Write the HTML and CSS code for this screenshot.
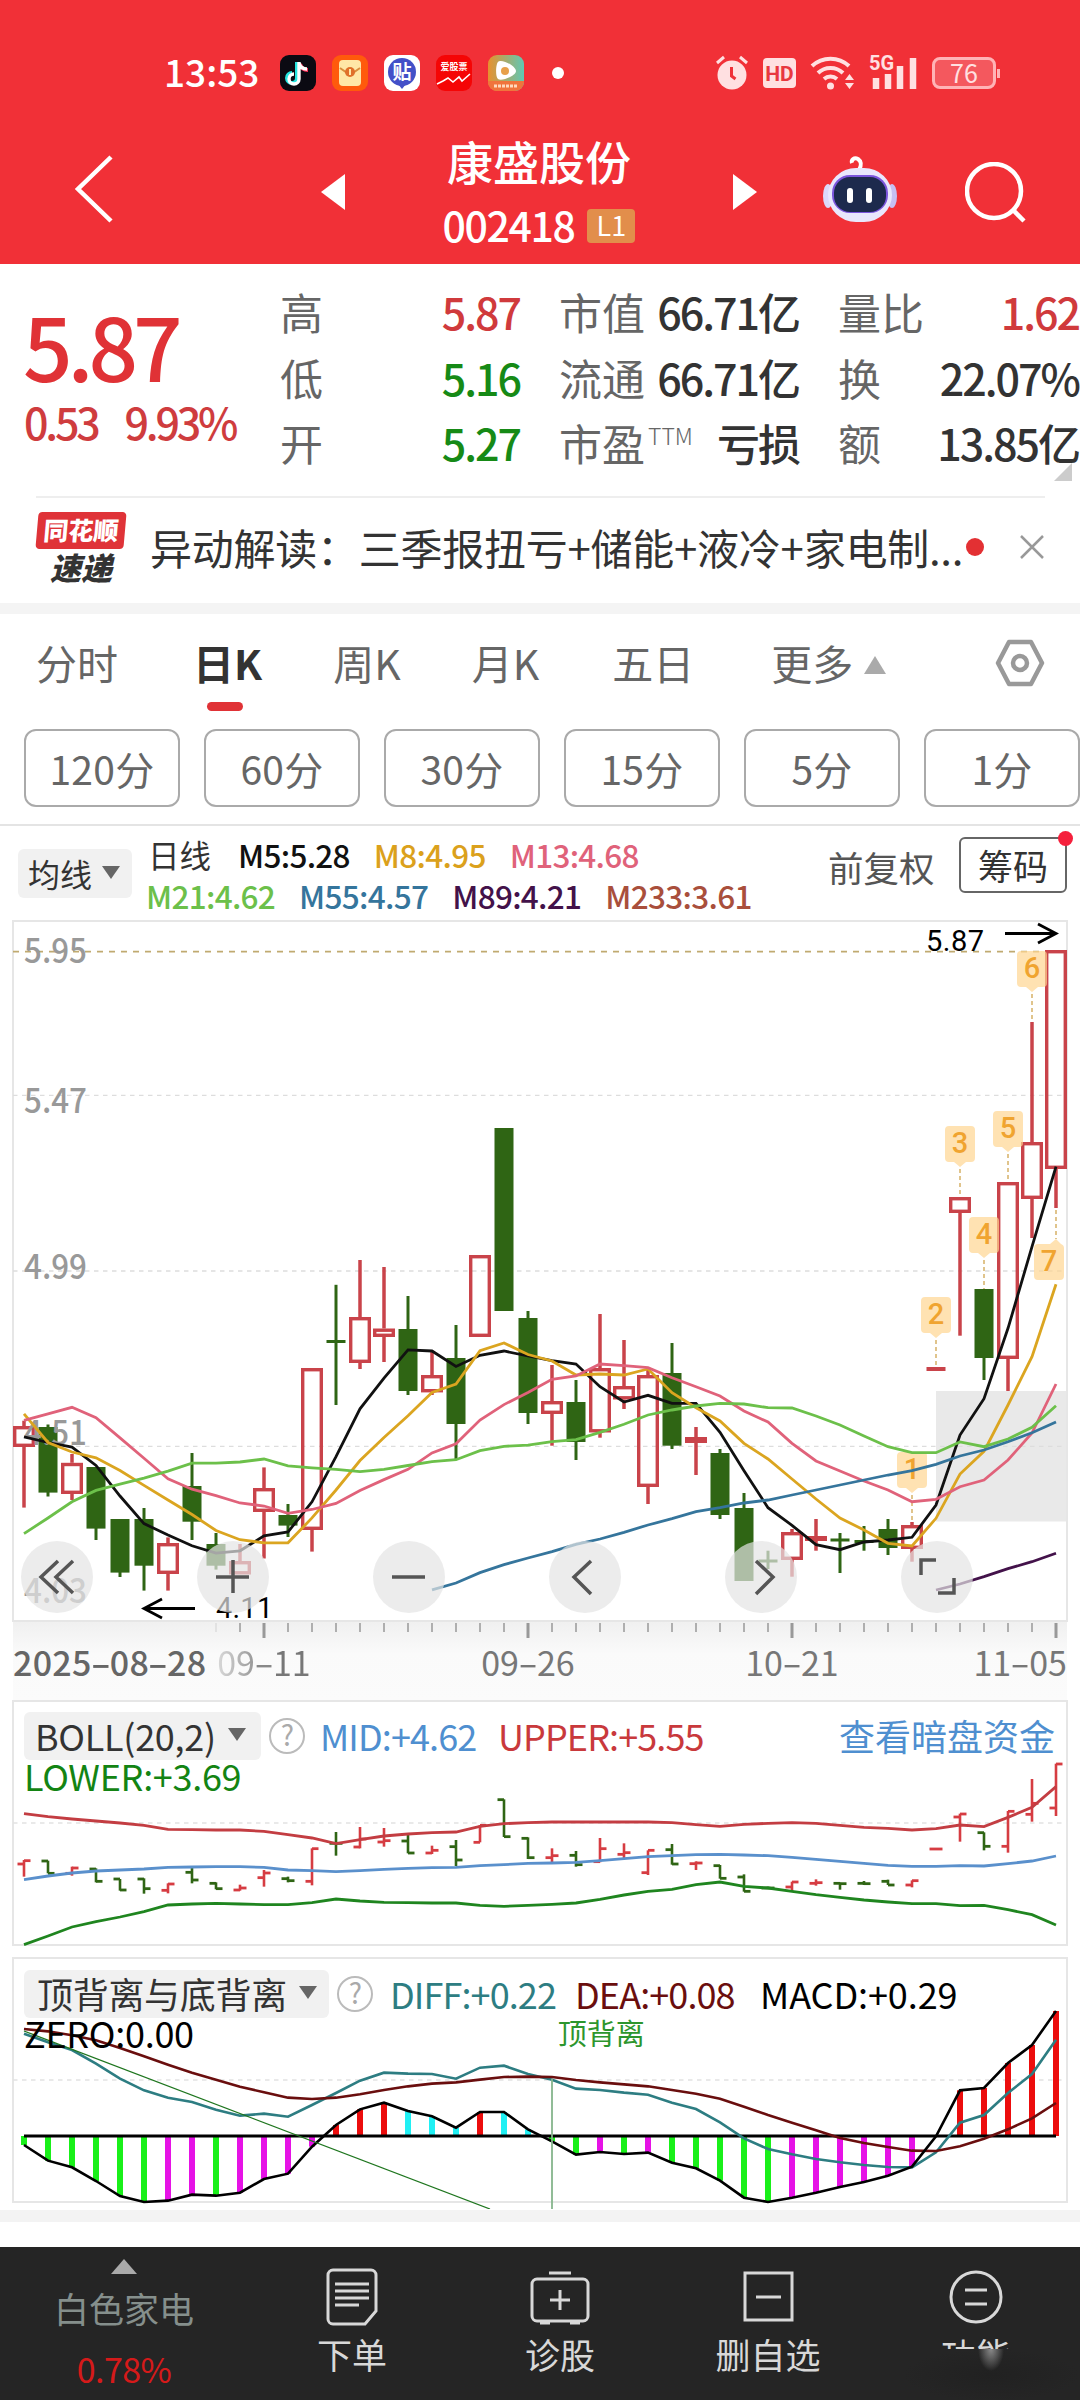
FILE: index.html
```html
<!DOCTYPE html>
<html lang="zh-CN">
<head>
  <meta charset="UTF-8" />
  <meta name="viewport" content="width=device-width, initial-scale=1.0"/>
  <title>康盛股份 002418</title>
  <link rel="stylesheet" href="styles.css">
</head>
<body>

  <header class="header">
    <div class="status-bar">
      <span class="time">13:53</span>
      <div class="apps">
        <svg class="app" viewBox="0 0 36 36"><rect width="36" height="36" rx="9" fill="#0b0a12"/><path d="M17 7v16a5 5 0 1 1-5-5" fill="none" stroke="#25e5e0" stroke-width="4"/><path d="M20 9c1 4 4 6 8 6" fill="none" stroke="#fe2c55" stroke-width="4"/><path d="M19 7v17a5 5 0 1 1-5-5M19 8c1 4 4 6 8 6" fill="none" stroke="#fff" stroke-width="3.4"/></svg>
        <svg class="app" viewBox="0 0 36 36"><rect width="36" height="36" rx="9" fill="#ff5a0c"/><rect x="7" y="5" width="22" height="26" rx="4" fill="#ffe7a6"/><path d="M8 13l10 7 10-7" fill="none" stroke="#d98d3c" stroke-width="2"/><circle cx="18" cy="17" r="5" fill="#e0702a"/><path d="M18 14v6" stroke="#ffe7a6" stroke-width="2"/></svg>
        <svg class="app" viewBox="0 0 36 36"><rect width="36" height="36" rx="9" fill="#fff"/><circle cx="18" cy="17" r="14" fill="#4350c8"/><path d="M14 29h8l-4 5z" fill="#4350c8"/><text x="18" y="24" class="app-text" font-size="19">贴</text></svg>
        <svg class="app" viewBox="0 0 36 36"><rect width="36" height="36" rx="9" fill="#f50505"/><text x="18" y="15" class="app-text" font-size="9">爱股票</text><path d="M1 29l6-3 5-3 5 4 6-5 3 4 8-7" fill="none" stroke="#fff" stroke-width="1.6"/></svg>
        <svg class="app" viewBox="0 0 36 36"><defs><linearGradient id="play" x1="0" x2="1"><stop offset="0" stop-color="#e8912d"/><stop offset="1" stop-color="#5fc8b4"/></linearGradient></defs><rect width="36" height="36" rx="9" fill="url(#play)"/><path d="M0 26h36v1a9 9 0 0 1-9 9H9a9 9 0 0 1-9-9z" fill="#f0743c"/><path d="M10 7c3-4 18 4 18 9S13 27 10 24s-2-15 0-17z" fill="#fff"/><circle cx="17" cy="16" r="4" fill="#e8a04a"/><path d="M6 31h24" stroke="#ffd9bd" stroke-width="3" stroke-dasharray="3 1"/></svg>
        <i class="more-dot"></i>
      </div>
      <div class="signals">
        <svg width="34" height="36" viewBox="0 0 34 36"><circle cx="17" cy="20" r="14.5" fill="#ffe0e1"/><path d="M2 8l7-6M32 8l-7-6" stroke="#ffe0e1" stroke-width="3"/><path d="M16.500 12v9l4 3" fill="none" stroke="#ef3038" stroke-width="3"/></svg>
        <svg width="33" height="30" viewBox="0 0 33 30"><rect width="33" height="30" rx="4" fill="#ffe0e1"/><text x="16.500" y="23" class="hd">HD</text></svg>
        <svg width="46" height="36" viewBox="0 0 46 36"><g fill="none" stroke="#ffe0e1" stroke-width="4"><path d="M2 11a27 27 0 0 1 37 0M8 18a18 18 0 0 1 25 0M14 24a10 10 0 0 1 13 0"/></g><circle cx="20.500" cy="31" r="3.500" fill="#ffe0e1"/><path d="M35 25l4.500-6 4.500 6zM35 28l4.500 6 4.500-6z" fill="#ffe0e1"/></svg>
        <svg width="48" height="36" viewBox="0 0 48 36" overflow="visible"><text x="-1" y="15" class="net">5G</text><path d="M6 23v11M18 19v15M30 11v23M43 3v31" stroke="#ffe0e1" stroke-width="6.500"/></svg>
        <div class="battery">76</div>
      </div>
    </div>

    <div class="title-bar">
      <svg class="back" viewBox="0 0 40 68"><path d="M37 2L4 34l33 32" fill="none" stroke="#fff" stroke-width="4.500"/></svg>
      <svg class="prev" viewBox="0 0 24 36"><path d="M24 0v36L0 18z" fill="#fff"/></svg>
      <div class="stock">
        <h1>康盛股份</h1>
        <div class="code">002418 <span class="level">L1</span></div>
      </div>
      <svg class="next" viewBox="0 0 24 36"><path d="M0 0v36l24-18z" fill="#fff"/></svg>
      <svg class="robot" viewBox="0 0 74 68">
        <path d="M36 15c3-5 2-9-1-11-4-2-7 1-6 4" fill="none" stroke="#fff" stroke-width="4"/>
        <ellipse cx="5" cy="41" rx="5" ry="12" fill="#dcd8fa"/><ellipse cx="69" cy="41" rx="5" ry="12" fill="#c6bff3"/>
        <rect x="5" y="13" width="64" height="54" rx="28" fill="#e9e7fc"/>
        <rect x="9" y="20" width="56" height="38" rx="18" fill="#7b55dc"/>
        <rect x="11" y="22" width="52" height="35" rx="16" fill="#1d2a4d"/>
        <rect x="24" y="33" width="6" height="15" rx="3" fill="#fff"/><rect x="43" y="33" width="6" height="15" rx="3" fill="#fff"/>
      </svg>
      <svg class="search" viewBox="0 0 62 62"><circle cx="29" cy="29" r="27" fill="none" stroke="#fff" stroke-width="4.500"/><path d="M48 48l11 11" stroke="#fff" stroke-width="4.500"/></svg>
    </div>
  </header>

  <section class="quote">
    <div class="price-box">
      <div class="price">5.87</div>
      <div class="change"><span>0.53</span><span>9.93%</span></div>
    </div>
    <dl class="stats">
      <div><dt>高</dt><dd class="up">5.87</dd></div>
      <div><dt>低</dt><dd class="down">5.16</dd></div>
      <div><dt>开</dt><dd class="down">5.27</dd></div>
    </dl>
    <dl class="stats">
      <div><dt>市值</dt><dd>66.71亿</dd></div>
      <div><dt>流通</dt><dd>66.71亿</dd></div>
      <div><dt>市盈<sup>TTM</sup></dt><dd>亏损</dd></div>
    </dl>
    <dl class="stats">
      <div><dt>量比</dt><dd class="up">1.62</dd></div>
      <div><dt>换</dt><dd>22.07%</dd></div>
      <div><dt>额</dt><dd>13.85亿</dd></div>
    </dl>
    <i class="corner"></i>
  </section>

  <section class="news">
    <div class="news-logo">
      <span class="logo-top">同花顺</span>
      <span class="logo-bottom">速递</span>
    </div>
    <p>异动解读：三季报扭亏+储能+液冷+家电制...</p>
    <i class="news-dot"></i>
    <svg class="close" viewBox="0 0 24 24"><path d="M1 1l22 22M23 1L1 23" stroke="#999" stroke-width="2.500"/></svg>
  </section>

  <nav class="tabs">
    <a>分时</a>
    <a class="active">日K</a>
    <a>周K</a>
    <a>月K</a>
    <a>五日</a>
    <a>更多<i class="tri-up"></i></a>
    <svg class="setting" viewBox="0 0 50 48"><path d="M14 3h22l11 21-11 21H14L3 24z" fill="none" stroke="#999" stroke-width="4.500" stroke-linejoin="round"/><circle cx="25" cy="24" r="7" fill="none" stroke="#999" stroke-width="4.500"/></svg>
  </nav>

  <div class="periods">
    <button>120分</button>
    <button>60分</button>
    <button>30分</button>
    <button>15分</button>
    <button>5分</button>
    <button>1分</button>
  </div>

  <section class="ma-bar">
    <span class="select ma-select">均线<i class="tri-down"></i></span>
    <div class="ma-values">
      <div class="ma-row">
        <span class="c-dark">日线</span>
        <span class="c-m5">M5:5.28</span>
        <span class="c-m8">M8:4.95</span>
        <span class="c-m13">M13:4.68</span>
      </div>
      <div class="ma-row">
        <span class="c-m21">M21:4.62</span>
        <span class="c-m55">M55:4.57</span>
        <span class="c-m89">M89:4.21</span>
        <span class="c-m233">M233:3.61</span>
      </div>
    </div>
    <span class="adjust">前复权</span>
    <span class="chips">筹码</span>
  </section>

  <section class="kline">
    <svg id="kline" width="1080" height="702" viewBox="0 920 1080 702"></svg>
    <div class="controls">
      <button><svg viewBox="0 0 72 72"><path d="M37 20L20 36l17 16M52 20L35 36l17 16"/></svg></button>
      <button><svg viewBox="0 0 72 72"><path d="M19 36h33M36 19v33"/></svg></button>
      <button><svg viewBox="0 0 72 72"><path d="M19 36h33"/></svg></button>
      <button><svg viewBox="0 0 72 72"><path d="M42 20L25 36l17 17"/></svg></button>
      <button><svg viewBox="0 0 72 72"><path d="M31 20l17 16-17 17"/></svg></button>
      <button><svg viewBox="0 0 72 72"><path d="M20 34V19h15M37 52h16V37"/></svg></button>
    </div>
  </section>

  <div class="axis">
    <svg id="ticks" width="1080" height="18" viewBox="0 1621 1080 18"></svg>
    <div class="dates">
      <span class="first">2025<i>-</i>08<i>-</i>28</span>
      <span>09<i>-</i>11</span>
      <span>09<i>-</i>26</span>
      <span>10<i>-</i>21</span>
      <span>11<i>-</i>05</span>
    </div>
  </div>

  <section class="panel boll">
    <svg class="plot" id="boll" width="1080" height="248" viewBox="0 1700 1080 248"></svg>
    <div class="legend">
      <span class="select">BOLL(20,2)<i class="tri-down"></i></span>
      <span class="help">?</span>
      <span class="c-mid">MID:+4.62</span>
      <span class="c-upper">UPPER:+5.55</span>
      <a>查看暗盘资金</a>
    </div>
    <div class="legend second c-lower">LOWER:+3.69</div>
  </section>

  <section class="panel macd">
    <svg class="plot" id="macd" width="1080" height="252" viewBox="0 1958 1080 252"></svg>
    <div class="legend">
      <span class="select">顶背离与底背离<i class="tri-down"></i></span>
      <span class="help">?</span>
      <span class="c-diff">DIFF:+0.22</span>
      <span class="c-dea">DEA:+0.08</span>
      <span class="c-macd">MACD:+0.29</span>
    </div>
    <div class="legend second c-macd"><span>ZERO:0.00</span><span class="diverge">顶背离</span></div>
  </section>

  <footer class="bottom-bar">
    <a class="sector">
      <i class="tri-up"></i>
      <span>白色家电</span>
      <b>0.78%</b>
    </a>
    <a>
      <svg viewBox="0 0 60 60"><path d="M11 3h38a5 5 0 0 1 5 5v36L43 57H11a5 5 0 0 1-5-5V8a5 5 0 0 1 5-5zM13 17h34M13 24h34M13 31h34M13 38h24"/></svg>
      <span>下单</span>
    </a>
    <a>
      <svg viewBox="0 0 60 60"><path d="M7 12h46a5 5 0 0 1 5 5v32a5 5 0 0 1-5 5H7a5 5 0 0 1-5-5V17a5 5 0 0 1 5-5zM19 6h22M30 23v20M20 33h20M10 56h10M40 56h10"/></svg>
      <span>诊股</span>
    </a>
    <a>
      <svg viewBox="0 0 60 60"><path d="M7 6h47v47H7zM18 30h25"/></svg>
      <span>删自选</span>
    </a>
    <a class="func">
      <svg viewBox="0 0 60 60"><circle cx="30" cy="30" r="25"/><path d="M19 23h22M19 37h22"/></svg>
      <span>功能</span>
    </a>
  </footer>

  <script src="chart.js"></script>
</body>
</html>
```
FILE: styles.css
```css
* {
  box-sizing: border-box;
}

body {
  margin: 0;
  width: 1080px;
  height: 2400px;
  overflow: hidden;
  background: #fff;
  color: #333;
  font-family: 'Noto Sans CJK SC', 'Roboto', sans-serif;
}

h1, p, dl, dt, dd {
  margin: 0;
}

i {
  font-style: normal;
}

svg {
  display: block;
  flex: none;
}

button {
  font-family: inherit;
  padding: 0;
  background: none;
}

/* header */
.header {
  height: 264px;
  background: #f13037;
  color: #fff;
}

.status-bar {
  height: 122px;
  padding: 50px 84px 0 164px;
  display: flex;
}

.status-bar > * {
  height: 46px;
  display: flex;
  align-items: center;
}

.time {
  width: 116px;
  font-size: 37px;
  font-weight: 500;
  line-height: 46px;
  margin-top: -2px;
}

.apps {
  gap: 16px;
}

.app {
  width: 36px;
  height: 36px;
}

.app-text {
  fill: #fff;
  text-anchor: middle;
  font-weight: 700;
}

.more-dot {
  width: 12px;
  height: 12px;
  margin-left: 12px;
  border-radius: 50%;
  background: #fff;
}

.signals {
  margin-left: auto;
  gap: 14px;
}

.hd {
  fill: #e8383f;
  font: 700 21px 'Roboto', sans-serif;
  text-anchor: middle;
}

.net {
  fill: #ffe0e1;
  font: 700 20px 'Roboto', sans-serif;
}

.battery {
  position: relative;
  width: 64px;
  height: 32px;
  border: 3px solid #ffb3b6;
  border-radius: 8px;
  background: #f4585e;
  color: #ffe0e1;
  font-size: 25px;
  line-height: 24px;
  text-align: center;
}

.battery::after {
  content: "";
  position: absolute;
  right: -7px;
  top: 9px;
  width: 3px;
  height: 9px;
  background: #ffb3b6;
}

.title-bar {
  display: flex;
  align-items: center;
  height: 142px;
  padding: 0 54px 6px 74px;
}

.back {
  width: 40px;
  height: 68px;
  margin-top: -2px;
}

.prev, .next {
  width: 24px;
  height: 36px;
  margin-top: 4px;
}

.prev {
  margin-left: 207px;
}

.stock {
  width: 388px;
  text-align: center;
}

.stock h1 {
  font-size: 46px;
  font-weight: 500;
  line-height: 64px;
  margin-top: 4px;
}

.code {
  display: flex;
  justify-content: center;
  align-items: center;
  gap: 13px;
  height: 64px;
  font-size: 41px;
  font-weight: 500;
  letter-spacing: -1.400px;
}

.level {
  width: 48px;
  height: 34px;
  margin-top: 3px;
  border-radius: 4px;
  background: #e28e4b;
  font-size: 27px;
  font-weight: 400;
  line-height: 32px;
  letter-spacing: 0;
}

.robot {
  width: 74px;
  height: 68px;
  margin: -2px 0 0 66px;
}

.search {
  width: 62px;
  height: 62px;
  margin: 5px -1px 0 auto;
}

/* quote */
.quote {
  position: relative;
  display: flex;
  height: 232px;
  margin: 0 1px 0 24px;
  padding-top: 14px;
}

.price-box {
  width: 256px;
  color: #e03236;
}

.price {
  height: 112px;
  margin-left: -1px;
  font-size: 87px;
  font-weight: 500;
  line-height: 132px;
  letter-spacing: -5px;
}

.change {
  display: flex;
  gap: 27px;
  font-size: 43px;
  font-weight: 500;
  line-height: 62px;
  letter-spacing: -3.200px;
  color: #cf3c3e;
}

.stats {
  width: 240px;
  margin-right: 39px;
}

.stats:last-of-type {
  width: 241px;
  margin-right: 0;
}

.stats div {
  display: flex;
  justify-content: space-between;
  height: 65.500px;
  font-size: 43px;
  line-height: 66px;
  white-space: nowrap;
}

.stats dt {
  color: #666;
}

.stats dd {
  font-weight: 500;
  letter-spacing: -2px;
}

.stats sup {
  margin-left: 3px;
  font-size: 23px;
  line-height: 1;
  vertical-align: 16px;
  letter-spacing: 0;
  font-weight: 300;
}

.up {
  color: #d03a3c;
}

.down {
  color: #168a16;
}

.corner {
  position: absolute;
  right: 7px;
  bottom: 15px;
  border-left: 18px solid transparent;
  border-bottom: 18px solid #ccc;
}

/* news */
.news {
  display: flex;
  align-items: center;
  height: 118px;
  padding: 0 36px 6px 37px;
  border-bottom: 11px solid #f4f4f4;
  background: linear-gradient(#eee, #eee) 36px 0 / 1009px 2px no-repeat;
}

.news-logo {
  width: 88px;
  margin-right: 25px;
  padding-top: 4px;
  text-align: center;
  white-space: nowrap;
}

.logo-top {
  display: block;
  height: 37px;
  border-radius: 4px;
  background: #df3338;
  color: #fff;
  font-size: 25px;
  font-weight: 900;
  line-height: 34px;
  transform: skewX(-5deg);
}

.logo-bottom {
  display: block;
  font-size: 31px;
  font-weight: 900;
  font-style: italic;
  line-height: 36px;
}

.news p {
  width: 814px;
  font-size: 42px;
  line-height: 60px;
  letter-spacing: -0.250px;
  white-space: nowrap;
  color: #333;
}

.news-dot {
  width: 18px;
  height: 18px;
  margin-left: 2px;
  border-radius: 50%;
  background: #e33033;
}

.close {
  width: 24px;
  height: 24px;
  margin-left: auto;
}

/* tabs */
.tabs {
  display: flex;
  align-items: center;
  height: 101px;
  padding: 0 35px 5px 36px;
  font-size: 41px;
  color: #666;
}

.tabs a {
  position: relative;
  margin-right: 71px;
  white-space: nowrap;
}

.tabs a:nth-child(1) {
  margin-right: 75px;
}

.tabs a:nth-child(4) {
  margin-right: 73px;
}

.tabs a:nth-child(5) {
  margin-right: 77px;
}

.tabs .active {
  color: #333;
  font-weight: 700;
}

.active::after {
  content: "";
  position: absolute;
  left: 14px;
  bottom: -19px;
  width: 36px;
  height: 9px;
  border-radius: 5px;
  background: #e03236;
}

.tri-up, .tri-down {
  display: inline-block;
  border: 10px solid transparent;
}

.tri-up {
  border-width: 0 11px 18px;
  border-bottom-color: #aaa;
  margin: 0 0 6px 11px;
}

.tri-down {
  border-width: 13px 9px 0;
  border-top-color: #666;
  margin-left: 12px;
}

.tabs .setting {
  width: 50px;
  height: 48px;
  margin: 1px 0 0 auto;
}

.tabs a:nth-child(6) {
  margin-right: 0;
}

.periods {
  display: flex;
  gap: 24px;
  height: 111px;
  padding: 14px 0 0 24px;
  border-bottom: 2px solid #e4e4e4;
}

.periods button {
  width: 156px;
  height: 78px;
  border: 2px solid #aaa;
  border-radius: 12px;
  color: #666;
  font-size: 39px;
  line-height: 70px;
  letter-spacing: 0.300px;
}

/* moving averages */
.ma-bar {
  display: flex;
  height: 94px;
  padding: 8px 13px 0 18px;
}

.select {
  display: flex;
  align-items: center;
  height: 48px;
  padding: 0 13px 3px;
  border-radius: 6px;
  background: #f1f1f1;
  color: #333;
}

.ma-select {
  width: 114px;
  height: 49px;
  margin-top: 15px;
  padding: 0 10px 2px;
  font-size: 32px;
}

.ma-select .tri-down {
  margin-left: 10px;
}

.ma-values {
  width: 681px;
  padding-left: 14px;
  font-size: 31.500px;
  font-weight: 500;
  letter-spacing: -0.700px;
}

.ma-row {
  display: flex;
  gap: 24px;
  height: 41px;
  line-height: 41px;
  white-space: nowrap;
}

.ma-row .c-dark {
  margin: 0 3px 0 2px;
  font-weight: 400;
  letter-spacing: 0;
}

.adjust {
  width: 133px;
  padding-left: 15px;
  font-size: 35.500px;
  line-height: 65px;
  color: #555;
}

.chips {
  position: relative;
  width: 108px;
  height: 56px;
  margin: 3px 0 0 auto;
  border: 2px solid #666;
  border-radius: 6px;
  font-size: 35px;
  line-height: 51px;
  text-align: center;
}

.chips::after {
  content: "";
  position: absolute;
  right: -8px;
  top: -8px;
  width: 15px;
  height: 15px;
  border-radius: 50%;
  background: #f5203c;
}

.c-m5 { color: #111; }
.c-m8 { color: #dba11c; }
.c-m13 { color: #e0627a; }
.c-m21 { color: #6cc04a; }
.c-m55 { color: #35759c; }
.c-m89 { color: #43124a; }
.c-m233 { color: #a94f3c; }
.c-mid { color: #4f8fd0; }
.c-upper { color: #c9393c; }
.c-lower { color: #138413; }
.c-diff { color: #2d7d82; }
.c-dea { color: #6a0e0e; }
.c-macd { color: #000; }

/* k line chart */
.kline {
  position: relative;
  height: 702px;
}

.controls {
  position: absolute;
  left: 21px;
  right: 107px;
  bottom: 9px;
  display: flex;
  justify-content: space-between;
}

.controls button {
  width: 72px;
  height: 72px;
  border: 0;
  border-radius: 50%;
  background: rgba(228, 228, 228, 0.7);
}

.controls path {
  fill: none;
  stroke: #555;
  stroke-width: 3.500;
}

.axis-label {
  fill: #999;
  font-size: 34px;
  font-weight: 500;
}

.extreme {
  fill: #000;
  font: 29px 'Roboto', sans-serif;
}

.tag-text {
  fill: #f0a430;
  font: 500 29px 'Roboto', sans-serif;
  text-anchor: middle;
}

.axis {
  height: 79px;
  margin: 0 13px;
  background: linear-gradient(#f0f0f0, #fafafa 40%, #fbfbfb);
}

.axis svg {
  margin-left: -13px;
}

.dates {
  display: flex;
  height: 44px;
  font-size: 34px;
  line-height: 44px;
  white-space: nowrap;
  color: #777;
}

.dates i {
  display: inline-block;
  width: 18px;
  text-align: center;
  transform: scaleX(1.700);
}

.dates span {
  width: 98px;
  margin-left: 166px;
  text-align: center;
}

.dates .first {
  width: 202px;
  margin-left: 0;
  text-align: left;
  font-weight: 500;
  color: #666;
  letter-spacing: 0.300px;
}

.dates span:nth-child(2) {
  margin-left: 0;
  background: linear-gradient(90deg, #ddd, #777 60%);
  background-clip: text;
  color: transparent;
}

.dates span:nth-child(2) i {
  color: #888;
}

.dates span:last-child {
  margin-left: auto;
  text-align: right;
}

/* indicator panels */
.panel {
  position: relative;
}

.plot {
  position: absolute;
  left: 0;
  top: 0;
}

.legend {
  position: relative;
  display: flex;
  align-items: center;
  height: 48px;
  font-size: 36px;
  line-height: 40px;
  letter-spacing: -0.900px;
  white-space: nowrap;
}

.legend > span:not(.select):not(.help), .legend a {
  margin-top: -3px;
}

.legend .select {
  letter-spacing: -0.300px;
}

.legend.second {
  height: 30px;
  line-height: 30px;
  letter-spacing: -0.300px;
}

.boll {
  height: 257px;
  margin-top: -1px;
  padding: 12px 25px 0 24px;
}

.boll .select {
  width: 237px;
  padding-left: 11px;
}

.boll .help + span {
  width: 178px;
}

.legend a {
  margin-left: auto;
  color: #4f8fd0;
  letter-spacing: 0;
}

.help {
  width: 36px;
  height: 36px;
  margin: 0 15px 0 8px;
  border: 2.500px solid #bbb;
  border-radius: 50%;
  color: #aaa;
  font-size: 28px;
  line-height: 29px;
  text-align: center;
}

.macd {
  height: 265px;
  padding: 13px 24px 0;
  border-bottom: 12px solid #f3f3f3;
}

.macd .select {
  width: 305px;
}

.macd .help ~ span {
  width: 185px;
}

.macd .help ~ .c-macd {
  letter-spacing: -0.100px;
}

.macd .help {
  margin-right: 17px;
}

.legend .diverge {
  margin-left: 364px;
  font-size: 29px;
  letter-spacing: 0;
  color: #2d962d;
}

/* bottom bar */
.bottom-bar {
  display: flex;
  height: 154px;
  margin-top: 25px;
  background: #252525;
  color: #d8d8d8;
  font-size: 35px;
}

.bottom-bar a {
  flex: 1;
  display: flex;
  flex-direction: column;
  align-items: center;
  padding-top: 20px;
}

.bottom-bar svg {
  width: 60px;
  height: 60px;
  fill: none;
  stroke: #d8d8d8;
  stroke-width: 3;
}

.bottom-bar span {
  margin-top: 2px;
  line-height: 50px;
}

.bottom-bar .sector {
  flex: 0 0 248px;
  padding-top: 12px;
}

.sector .tri-up {
  border-width: 0 13px 15px;
  margin: 0;
}

.bottom-bar .sector span {
  margin-top: 9px;
  color: #858f8c;
}

.sector b {
  margin-top: 11px;
  font-size: 34px;
  font-weight: 400;
  line-height: 50px;
  letter-spacing: -0.600px;
  color: #d51a1a;
}

.func {
  position: relative;
}

/* fade over the lower part of the last label */
.func::after {
  content: "";
  position: absolute;
  left: 30px;
  right: 0;
  top: 102px;
  bottom: 0;
  background: radial-gradient(ellipse 13px 22px at 89px 0, #8a8a8a, transparent), radial-gradient(ellipse at center, #212121, #252525 70%);
}
```
FILE: chart.js
```js
const RED = "#c9434a";
const GREEN = "#2f6514";
const STEP = 24;
const x = i => 24 + i * STEP;

// [direction, high, top, bottom, low]
const candles = [
  ["r",1420.7,1426,1447,1507.6],["g",1424.5,1427,1492.6,1496.5],["r",1454,1462.8,1494,1500],["g",1467,1467,1528.6,1540],
  ["g",1519,1519,1572.6,1577],["g",1508,1519,1565.7,1590.6],["r",1537.4,1543,1574,1590.6],["g",1453,1486,1521.7,1540],
  ["g",1533,1544,1565.7,1569.6],["r",1544,1561,1574.5,1574.5],["r",1467.4,1488,1512,1558.5],["g",1504,1515,1525.6,1537],
  ["r",1368,1368,1530,1551.6],["g",1284.8,1340,1343,1405],["r",1260,1317,1363,1369],["r",1267,1328.5,1337,1362],
  ["g",1296,1329,1391,1395],["r",1350.7,1375,1392.4,1395],["g",1325,1358,1424,1459.7],["r",1255,1255,1337,1337],
  ["g",1128,1128,1311,1311],["g",1311,1318,1413,1424],["r",1365,1401,1414,1445.7],["g",1380,1402,1442,1460],
  ["r",1314,1368,1432.5,1437.7],["r",1340,1386,1399.5,1409],["r",1370,1375,1487,1504],["g",1343,1373,1445.7,1449],
  ["r",1427,1437,1443,1475],["g",1449,1453,1515,1519],["g",1493,1508,1581,1581],["g",1550.7,1559.5,1562.500,1569],
  ["r",1529,1532,1560,1576.7],["r",1519,1536,1541,1550.7],["g",1533,1538.5,1541.5,1573],["g",1526,1540,1543,1550.7],
  ["g",1519,1529,1548,1555],["r",1522,1525,1549,1561.7],["r",1367,1367,1371,1371],["r",1197,1197,1213,1335.7],
  ["g",1289,1289,1358,1380],["r",1182,1182,1359,1391],["r",1022,1142,1199,1238],["r",950,950,1169,1208]
];

const ma = [
  ["#111", 0, [1436.8,1442.5,1447.1,1465.5,1496,1523.6,1535.1,1545.8,1553.1,1550.8,1535.9,1532,1501.8,1456.7,1408.8,1378.2,1349.9,1351,1366.4,1355.3,1351,1356,1360.7,1364,1386.7,1402,1395.3,1403.3,1403.3,1432.3,1470.7,1507.7,1525.3,1544.7,1549.7,1542,1540,1537.3,1505,1435,1398.7,1328.3,1246.7,1166.7]],
  ["#dba520", 0, [1413.8,1442.5,1452,1457.8,1470.5,1485.4,1500,1514.5,1530.5,1539.7,1542.8,1542.8,1517.9,1490,1460.5,1437.5,1415.7,1392.4,1384,1350.7,1343,1354.5,1361,1375,1374,1375,1369,1392.7,1407.7,1421,1443.3,1459,1479,1499,1518,1530,1543.3,1546,1518.3,1474,1451.3,1405,1356.7,1284.3]],
  ["#e0627a", 0, [1420.3,1413.8,1407.3,1417.6,1437.9,1458.2,1478.9,1489.2,1495.7,1503,1506,1513.3,1509.5,1503.4,1490.4,1479.6,1469.3,1452.9,1443.7,1420,1404.6,1392.4,1379.3,1376,1364,1365.7,1367.7,1377.7,1386.7,1396,1411,1422,1443.3,1461,1471,1481,1490,1501.7,1499.3,1486.7,1480,1460,1433,1384]],
  ["#6cc04a", 0, [1533.6,1518,1501.8,1490.4,1484.2,1478.1,1471.2,1463.2,1463.2,1462,1459,1465.9,1467.8,1469.3,1471.6,1469.3,1465.5,1461.6,1459.7,1450.6,1446.3,1445.2,1441.7,1439.7,1432.3,1424.3,1415,1410,1406,1403.3,1404,1407.7,1408,1416,1425,1436,1446.7,1452.7,1452.7,1442,1446.7,1439,1427.3,1405.7]],
  ["#35759c", 17, [1589.9,1583,1572.6,1564.6,1558,1551.7,1544.3,1539,1532.3,1525,1518.7,1511.7,1507.7,1503,1500,1495,1490,1485,1480,1475,1470.7,1464.3,1456,1450,1441.7,1432.7,1422]],
  ["#43124a", 38, [1590,1584,1576.7,1568.7,1561.7,1553.3]]
];

// [label, center x, box top, lead end]
const tags = [[1,912,1452,1522],[2,936,1297,1366],[3,960,1126,1197],[4,984,1217,1289],[5,1008,1111,1182],[6,1032,951,1022]];

// open / close bars, thirds of a pixel below the panel origin: [direction, high, low, open, close]
const bars = [
  ["r",510,560,522,512],["g",512,550,513,550],["r",530,557,550,534],["g",535,577,537,574],["g",567,602,567,600],["g",565,611,567,596],
  ["r",580,610,601,582],["g",533,580,547,570],["g",577,598,580,596],["r",584,602,600,594],["r",540,590,563,549],["g",560,577,566,572],
  ["r",475,586,574,476],["g",426,497,460,460],["r",411,475,471,447],["r",414,470,456,452],["g",432,490,453,489],["r",467,492,489,481],
  ["g",450,528,470,510],["r",405,457,457,406],["g",328,441,329,440],["g",442,507,445,503],["r",475,518,503,497],["g",483,530,496,524],
  ["r",444,517,515,476],["r",460,505,493,488],["r",481,555,548,481],["g",462,524,479,522],["r",514,540,521,519],["g",525,566,527,565],
  ["g",553,605,561,604],["g",590,597,594,594],["r",575,605,591,576],["r",568,587,580,578],["g",578,599,580,581],["g",573,585,580,581],
  ["g",569,585,574,585],["r",571,592,585,572],["r",476,478,477,477],["r",371,455,381,372],["g",427,481,428,469],["r",363,488,469,364],
  ["r",267,395,373,340],["r",221,378,354,222]
];
const upper = [371,380,387,393,399,406,418,419,420,420,424,434,444,461,449,438,432,428,426,409,401,398,396,396,396,396,396,398,404,409,403,400,398,400,406,412,415,420,416,405,410,382,352,290];
const mid = [569,558,549,543,540,537,532,531,530,530,532,540,542,545,542,538,535,533,532,527,524,520,519,517,512,506,500,497,494,493,495,497,502,508,514,520,526,529,529,527,528,521,513,498];
const lower = [764,738,711,695,681,665,645,642,640,642,644,644,638,627,633,637,638,639,639,646,649,646,643,639,628,615,604,598,584,576,589,594,604,614,622,630,636,641,641,647,646,659,674,705];

const hist = [588,635,655,696,741,759,755,737,740,731,690,674,593,528,481,461,486,502,536,489,489,541,577,617,609,615,611,641,658,695,746,759,746,731,714,699,680,653,562,424,417,342,288,186];
const histColors = "ggggggmmgmmmmrrrcccrccggmgmgggggmmmmmm-rrrrr";
const diff = [254,280,303,344,389,424,446,459,482,500,494,503,468,432,395,371,374,375,389,356,350,375,392,419,423,431,437,461,480,520,568,600,616,630,640,648,654,655,610,521,498,432,375,272];
const dea = [240,247,259,274,297,322,347,371,392,413,430,446,450,446,436,423,412,404,400,392,384,383,384,393,400,406,412,423,434,449,473,498,521,544,567,582,594,605,606,592,569,541,508,462];

function seg(x1, y1, x2, y2, color, w, extra = "") {
  return `<line x1="${x1}" y1="${y1}" x2="${x2}" y2="${y2}" stroke="${color}" stroke-width="${w}" ${extra}/>`;
}

function poly(values, color, w, start = 0) {
  const pts = values.map((v, i) => `${x(i + start)},${v}`).join(" ");
  return `<polyline points="${pts}" fill="none" stroke="${color}" stroke-width="${w}"/>`;
}

function frame(top, bottom) {
  return `<rect x="13" y="${top}" width="1054" height="${bottom - top}" fill="none" stroke="#e6e6e6" stroke-width="2"/>`;
}

function candle([dir, high, top, bottom, low], i) {
  const cx = x(i);
  if (dir === "g") {
    return seg(cx, high, cx, low, GREEN, 3) + `<rect x="${cx - 9.5}" y="${top}" width="19" height="${bottom - top}" fill="${GREEN}"/>`;
  }
  let out = seg(cx, high, cx, top, RED, 3.5) + seg(cx, bottom, cx, low, RED, 3.5);
  if (bottom - top <= 6) {
    const half = bottom - top < 5 ? 9.5 : 11;
    return out + `<rect x="${cx - half}" y="${top}" width="${half * 2}" height="${bottom - top}" fill="${RED}"/>`;
  }
  return out + `<rect x="${cx - 9.3}" y="${top + 1.7}" width="18.6" height="${bottom - top - 3.4}" fill="none" stroke="${RED}" stroke-width="3.4"/>`;
}

function drawKline() {
  let s = `<rect x="936" y="1391" width="131" height="130.5" fill="#e9e9e9"/>` + frame(921, 1621);
  s += seg(13, 951.7, 1045, 951.7, "#c0aa70", 1.8, 'stroke-dasharray="6 6"');
  [1095.3, 1271, 1446.3].forEach(y => s += seg(13, y, 1066, y, "#ddd", 1.3, 'stroke-dasharray="4.5 4.5"'));
  s += candles.map(candle).join("");
  [["5.95", 963], ["5.47", 1112.5], ["4.99", 1279], ["4.51", 1445], ["4.03", 1603]].forEach(([t, y]) => {
    s += `<text class="axis-label" x="24" y="${y}" textLength="63" lengthAdjust="spacingAndGlyphs">${t}</text>`;
  });
  tags.forEach(([n, cx, y, end]) => {
    s += `<path d="M${cx - 11} ${y}h22q4 0 4 4v28q0 4-4 4h-5l-6 5-6-5h-5q-4 0-4-4v-28q0-4 4-4z" fill="#ffd591" fill-opacity=".7"/>`;
    s += seg(cx, y + 43, cx, end, "#e0c48c", 2, 'stroke-dasharray="4 3"') + `<text class="tag-text" x="${cx}" y="${y + 27}">${n}</text>`;
  });
  s += `<path d="M1038 1244h12l6-5 5 5q3 1 3 4v28q0 4-4 4h-22q-4 0-4-4v-28q0-4 4-4z" fill="#ffd591" fill-opacity=".7"/>`;
  s += seg(1056, 1210, 1056, 1239, "#e0c48c", 2, 'stroke-dasharray="4 3"') + `<text class="tag-text" x="1049" y="1271">7</text>`;
  ma.forEach(([c, start, v]) => s += poly(v, c, 2.8, start));
  s += `<text class="extreme" x="926" y="951" textLength="58">5.87</text><path d="M1005 933.5h50M1038 924l18 9.5-18 9.5" fill="none" stroke="#000" stroke-width="2.8"/>`;
  s += `<text class="extreme" x="216" y="1618" textLength="57">4.11</text><path d="M195 1608.5h-50M162 1599l-18 9.5 18 9.5" fill="none" stroke="#000" stroke-width="2.8"/>`;
  document.getElementById("kline").innerHTML = s;

  let t = "";
  for (let i = 8; i < 44; i++) {
    const major = i % 11 === 10;
    t += seg(x(i), 1622, x(i), major ? 1637 : 1631, i === 8 ? "#ddd" : "#999", major ? 3 : 1.5);
  }
  document.getElementById("ticks").innerHTML = t;
}

function drawBoll() {
  const y = v => 1690 + v / 3;
  let s = frame(1701, 1945) + seg(13, 1823, 1066, 1823, "#e2e2e2", 1.3, 'stroke-dasharray="4.5 4.5"');
  bars.forEach(([dir, high, low, open, close], i) => {
    const c = dir === "r" ? "#d63c42" : GREEN;
    s += seg(x(i), y(high), x(i), y(low), c, 2.6) + seg(x(i) - 6.5, y(open), x(i), y(open), c, 2.8) + seg(x(i), y(close), x(i) + 6.5, y(close), c, 2.8);
  });
  s += poly(upper.map(y), "#c33d42", 2.8) + poly(mid.map(y), "#5a90cc", 2.8) + poly(lower.map(y), "#1f851f", 2.8);
  document.getElementById("boll").innerHTML = s;
}

function drawMacd() {
  const y = v => 1950 + v / 3;
  const fills = { g: "#19f019", m: "#e612e6", r: "#ec0d0d", c: "#20f0f4" };
  let s = frame(1959, 2203) + seg(13, 2081, 1066, 2081, "#e2e2e2", 1.3, 'stroke-dasharray="4.5 4.5"');
  hist.forEach((v, i) => {
    if (fills[histColors[i]]) s += seg(x(i), 2137, x(i), y(v), fills[histColors[i]], 6);
  });
  s += seg(24, 2137, 1056, 2137, "#000", 2.8);
  s += poly(diff.map(y), "#2d7d82", 2.6) + poly(dea.map(y), "#6a0e0e", 2.6) + poly(hist.map(y), "#000", 2.6);
  s += seg(24, 2032, 490, 2210, "#1f761f", 1.3) + seg(552, 2080, 552, 2210, "#85b58c", 1.8);
  document.getElementById("macd").innerHTML = s;
}

drawKline();
drawBoll();
drawMacd();
```
